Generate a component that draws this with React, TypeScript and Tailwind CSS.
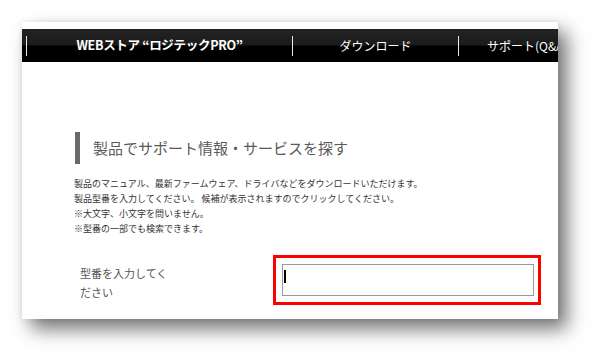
export default function App() {
  const jp = { fontFamily: '"Noto Sans CJK JP", "Liberation Sans", sans-serif' };

  return (
    <div className="min-h-screen w-full bg-white pt-[22px] pl-[22px]" style={jp}>
      <div className="flex h-[297px] w-[536px] flex-col bg-white pt-[7px] shadow-[9px_10px_18px_rgba(0,0,0,0.55),0_0_6px_rgba(0,0,0,0.08)]">
        {/* Nav bar */}
        <div className="flex h-[33px] items-center overflow-hidden bg-[linear-gradient(to_bottom,#232323_0%,#1b1b1b_48%,#000_52%,#000_100%)] text-white">
          <div className="ml-[4px] h-[20px] w-px shrink-0 bg-[#e8e8e8]" />
          <div className="flex w-[265px] shrink-0 justify-center text-[12.5px] font-bold tracking-[-0.3px]">WEBストア “ロジテックPRO”</div>
          <div className="h-[20px] w-px shrink-0 bg-[#e8e8e8]" />
          <div className="flex w-[165px] shrink-0 justify-center text-[12px]">ダウンロード</div>
          <div className="h-[20px] w-px shrink-0 bg-[#e8e8e8]" />
          <div className="shrink-0 whitespace-nowrap pl-[28px] text-[12px]">サポート(Q&amp;A)</div>
        </div>

        {/* Heading */}
        <div className="ml-[53px] mt-[70px] flex items-center">
          <div className="h-[32px] w-[5px] bg-[#6a6a6a]" />
          <h1 className="ml-[13px] text-[15px] font-normal text-[#5a5a5a]">製品でサポート情報・サービスを探す</h1>
        </div>

        {/* Description */}
        <div className="ml-[52px] mt-[12px] text-[9px] leading-[15px] text-[#333]">
          <p>製品のマニュアル、最新ファームウェア、ドライバなどをダウンロードいただけます。</p>
          <p>製品型番を入力してください。 候補が表示されますのでクリックしてください。</p>
          <p>※大文字、小文字を問いません。</p>
          <p>※型番の一部でも検索できます。</p>
        </div>

        {/* Search row */}
        <div className="mt-[19px] flex">
          <div className="ml-[58px] mt-[9px] w-[193px] text-[11px] leading-[19px] text-[#555]">
            <div className="w-[92px]">型番を入力してください</div>
          </div>
          <div className="h-[50px] w-[268px] border-[3px] border-[#f00] pb-[6px] pl-[6px] pr-[4px] pt-[6px]">
            <div className="h-full w-full border border-[#999] bg-white pl-[1px] pt-[5px]">
              <div className="h-[13px] w-[2px] bg-black" />
            </div>
          </div>
        </div>
      </div>
    </div>
  );
}
